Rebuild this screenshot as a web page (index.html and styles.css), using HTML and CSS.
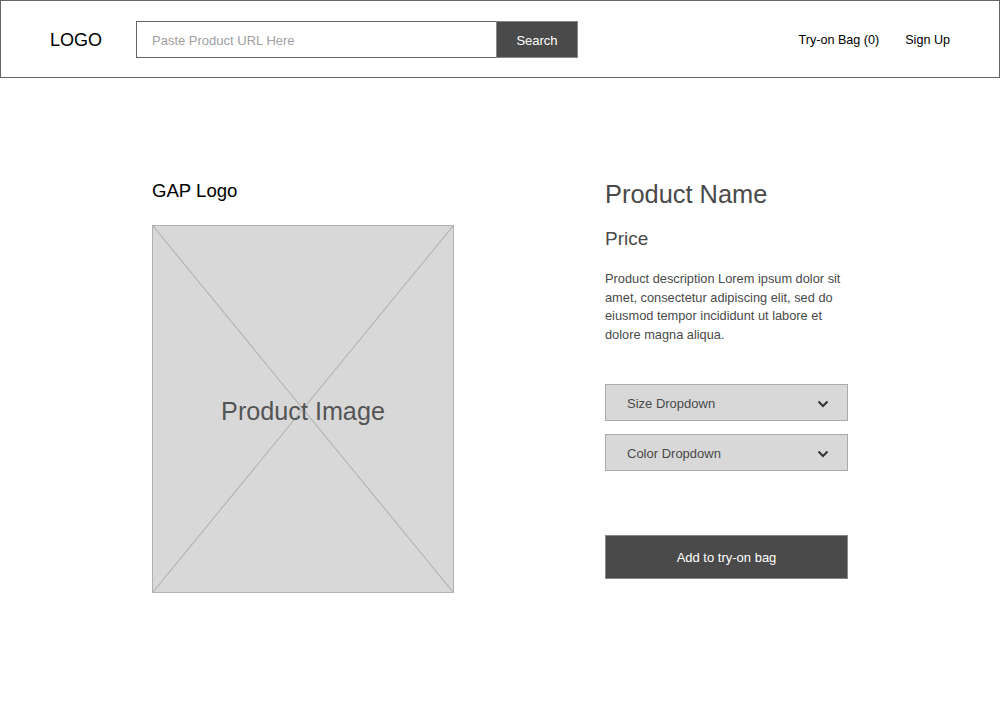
FILE: index.html
```html
<!DOCTYPE html>
<html lang="en">
<head>
<meta charset="utf-8">
<title>Product</title>
<link rel="stylesheet" href="styles.css">
</head>
<body>
<header class="topbar">
  <div class="logo">LOGO</div>
  <form class="search">
    <div class="search-input">Paste Product URL Here</div>
    <div class="search-btn">Search</div>
  </form>
  <nav class="nav">
    <a class="nav-link">Try-on Bag (0)</a>
    <a class="nav-link">Sign Up</a>
  </nav>
</header>
<main class="product">
  <section class="media">
    <div class="brand">GAP Logo</div>
    <div class="image-ph">
      <svg class="cross" viewBox="0 0 100 100" preserveAspectRatio="none">
        <line x1="0" y1="0" x2="100" y2="100" vector-effect="non-scaling-stroke"/>
        <line x1="100" y1="0" x2="0" y2="100" vector-effect="non-scaling-stroke"/>
      </svg>
      <span class="image-label">Product Image</span>
    </div>
  </section>
  <section class="info">
    <h1 class="name">Product Name</h1>
    <div class="price">Price</div>
    <p class="desc">Product description Lorem ipsum dolor sit amet, consectetur adipiscing elit, sed do eiusmod tempor incididunt ut labore et dolore magna aliqua.</p>
    <div class="dropdowns">
      <div class="dropdown"><span>Size Dropdown</span>
        <svg class="chev" viewBox="0 0 12 8"><path d="M1.5 1.5 L6 6 L10.5 1.5"/></svg>
      </div>
      <div class="dropdown"><span>Color Dropdown</span>
        <svg class="chev" viewBox="0 0 12 8"><path d="M1.5 1.5 L6 6 L10.5 1.5"/></svg>
      </div>
    </div>
    <div class="add-btn">Add to try-on bag</div>
  </section>
</main>
</body>
</html>
```
FILE: styles.css
```css
* { box-sizing: border-box; }
html, body { margin: 0; padding: 0; background: #fff; }
body { font-family: "Liberation Sans", Arial, sans-serif; color: #000; width: 1000px; }

.topbar {
  height: 78px;
  border: 1.5px solid #666;
  display: flex;
  align-items: center;
  padding: 1px 49px 0 49px;
}
.logo { font-size: 18px; width: 86px; margin-top: 1px; }
.search { display: flex; height: 37px; margin: 0; }
.search-input {
  width: 360px;
  border: 1px solid #666;
  border-right: none;
  color: #a0a0a0;
  font-size: 13px;
  padding: 1px 0 0 15px;
  display: flex; align-items: center;
}
.search-btn {
  width: 82px;
  background: #4a4a4a;
  border: 1px solid #888;
  color: #fff;
  font-size: 13px;
  padding-top: 1px;
  display: flex; align-items: center; justify-content: center;
}
.nav { margin-left: auto; display: flex; gap: 26px; font-size: 12.6px; }
.nav-link { color: #000; }

.product {
  display: flex;
  gap: 151px;
  padding: 101px 0 0 152px;
}
.media { width: 302px; }
.brand { font-size: 18.6px; line-height: 22px; height: 46px; padding-top: 1px; }
.image-ph {
  position: relative;
  width: 302px; height: 368px;
  background: #d8d8d8;
  border: 1px solid #b0b0b0;
  display: flex; align-items: center; justify-content: center;
  padding-top: 5px;
}
.cross { position: absolute; inset: 0; width: 100%; height: 100%; }
.cross line { stroke: #b0b0b0; stroke-width: 1; }
.image-label { position: relative; font-size: 25.2px; color: #555; }

.info { width: 243px; color: #4a4a4a; }
.name { font-size: 25.4px; font-weight: normal; margin: 0; line-height: 30px; }
.price { font-size: 19px; margin-top: 19px; line-height: 22px; }
.desc { font-size: 12.8px; line-height: 18.7px; margin: 20px 0 0; }
.dropdowns { margin-top: 39px; display: flex; flex-direction: column; gap: 13px; }
.dropdown {
  height: 37px;
  background: #d8d8d8;
  border: 1px solid #aaa;
  display: flex; align-items: center; justify-content: space-between;
  padding: 3px 18px 0 21px;
  font-size: 13px; color: #4a4a4a;
}
.chev { width: 12px; height: 8px; }
.chev path { fill: none; stroke: #333; stroke-width: 2; }
.add-btn {
  margin-top: 64px;
  height: 44px;
  background: #4a4a4a;
  border: 1px solid #888;
  color: #fff;
  font-size: 13px;
  padding-top: 1px;
  display: flex; align-items: center; justify-content: center;
}
```
